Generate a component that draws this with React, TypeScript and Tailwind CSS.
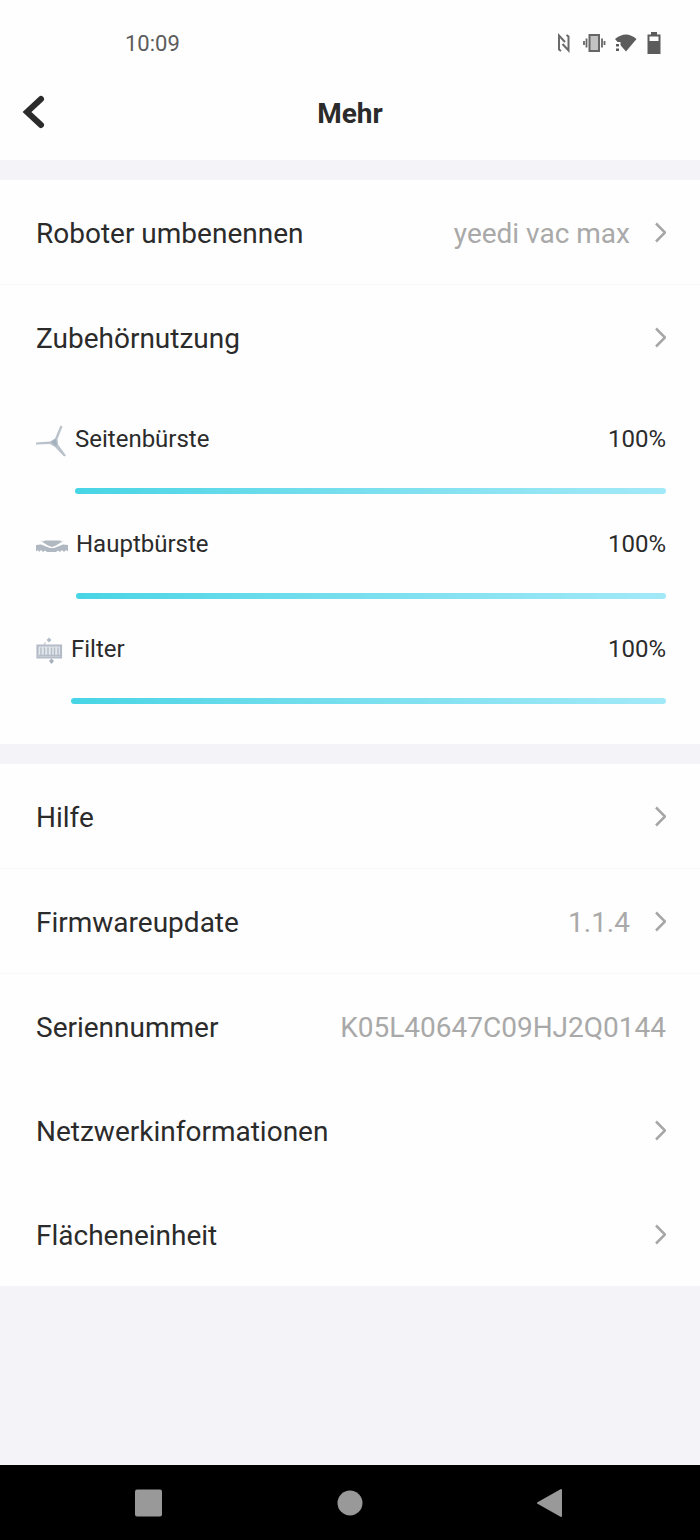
import type { ReactNode } from 'react';

const accessories = [
  { name: 'Seitenbürste', percent: 100, icon: <SideBrushIcon /> },
  { name: 'Hauptbürste', percent: 100, icon: <MainBrushIcon /> },
  { name: 'Filter', percent: 100, icon: <FilterIcon /> },
];

export default function App() {
  return (
    <div className="flex min-h-screen flex-col bg-[#f3f3f8] font-[Roboto,sans-serif] text-[#2b2b2b]">
      <header className="bg-[#fefefe]">
        <StatusBar />
        <div className="grid h-24 grid-cols-[1fr_auto_1fr] items-center px-5">
          <button type="button" aria-label="Zurück" className="justify-self-start">
            <svg className="h-10 w-7" viewBox="0 0 28 40" fill="none" stroke="#2b2b2b">
              <path d="M21 7 L7 20 L21 33" strokeWidth="6" strokeLinecap="round" strokeLinejoin="miter" />
            </svg>
          </button>
          <h1 className="pt-1 text-[28px] font-bold">Mehr</h1>
        </div>
      </header>

      <main className="mt-5 flex flex-col gap-5">
        <section className="bg-[#fefefe]">
          <Row label="Roboter umbenennen" value="yeedi vac max" divider />
          <Row label="Zubehörnutzung" />
          <ul className="flex flex-col gap-9 pt-9 pr-[34px] pb-10 pl-9">
            {accessories.map((item) => (
              <li key={item.name} className="flex gap-2">
                <span className="flex h-8 items-center">{item.icon}</span>
                <div className="flex-1">
                  <div className="flex h-7 items-center justify-between text-2xl">
                    <span>{item.name}</span>
                    <span>{item.percent}%</span>
                  </div>
                  <div
                    role="progressbar"
                    aria-label={item.name}
                    aria-valuenow={item.percent}
                    className="mt-[35px] h-1.5"
                  >
                    <div
                      className="h-full rounded-full bg-linear-to-r from-[#46d5e5] to-[#a2e9f8]"
                      style={{ width: `${item.percent}%` }}
                    />
                  </div>
                </div>
              </li>
            ))}
          </ul>
        </section>

        <section className="bg-[#fefefe]">
          <Row label="Hilfe" divider />
          <Row label="Firmwareupdate" value="1.1.4" divider />
          <Row label="Seriennummer" value="K05L40647C09HJ2Q0144" plain />
          <Row label="Netzwerkinformationen" />
          <Row label="Flächeneinheit" />
        </section>
      </main>

      <NavigationBar />
    </div>
  );
}

function Row({
  label,
  value,
  divider,
  plain,
}: {
  label: string;
  value?: string;
  divider?: boolean;
  plain?: boolean;
}) {
  const content: ReactNode = (
    <>
      <span>{label}</span>
      <span className="flex items-center gap-6 text-[#a9a9a9]">
        {value}
        {!plain && (
          <svg className="h-6 w-3" viewBox="0 0 12 24" fill="none" stroke="#a6a6a6" strokeWidth="2.5">
            <path d="M2 1.5 L11 10.5 L2 19.5" />
          </svg>
        )}
      </span>
    </>
  );
  const box = 'flex h-26 w-full items-center justify-between pt-[3px] pr-[34px] pl-9 text-[28px]';

  return (
    <div className={divider ? 'border-b border-[#f8f8f8]' : ''}>
      {plain ? (
        <div className={box}>{content}</div>
      ) : (
        <button type="button" className={box}>
          {content}
        </button>
      )}
    </div>
  );
}

function StatusBar() {
  return (
    <div className="flex h-16 items-center justify-between pt-[22px] pr-[38px] pl-[125px] text-[#5c5c5c]">
      <span className="text-[22px]">10:09</span>
      <div className="flex items-center gap-2">
        {/* NFC */}
        <svg className="h-6 w-5" viewBox="0 0 20 24" fill="none" stroke="#6a6a6a" strokeWidth="2">
          <path d="M7 20 L5 18.5 V4.5 L11 11 M12.5 4 L14.5 5.5 V19.5 L8.5 13" />
        </svg>
        {/* vibrate */}
        <svg className="h-6 w-6" viewBox="0 0 24 24" fill="none" stroke="#666" strokeWidth="2">
          <rect x="7.5" y="4" width="9.5" height="16" fill="#c2c2c2" />
          <path d="M4.5 7.5 V16.5 M20 7.5 V16.5 M2 10 V14 M22.5 10 V14" strokeWidth="1.8" />
        </svg>
        {/* wifi */}
        <svg className="h-6 w-6" viewBox="0 0 24 24" fill="#5c5c5c">
          <path d="M1 8 Q12 -1 22.5 8 L12 20.5 Z" />
          <path d="M0 11 H6.5 V20.5 H0 Z" fill="#fefefe" />
          <path d="M2 13 h3 v2.5 h-3 z M2 17.5 h3 v2.5 h-3 z" />
        </svg>
        {/* battery */}
        <svg className="h-6 w-4" viewBox="0 0 16 24" fill="none" stroke="#5c5c5c">
          <path d="M2.5 4.5 H13.5 V22 H2.5 Z" strokeWidth="2" />
          <path d="M5 2.5 H11" strokeWidth="3" />
          <path d="M2.5 10.5 H13.5 V22 H2.5 Z" fill="#5c5c5c" />
        </svg>
      </div>
    </div>
  );
}

function SideBrushIcon() {
  return (
    <svg className="h-8 w-[31px]" viewBox="0 0 31 32" fill="#b9c2cb">
      <path d="M0 17.5 L14 16.5 L19 13.5 L24.5 0.5 L26.5 1.5 L21.5 14 L22 19.5 L30 30.5 L28 31.5 L19 22 L14 19 L0 19.5 Z" />
      <path d="M15 17 L20 14 L21 20.5 L19.5 21 Z" fill="#a3b0bd" />
    </svg>
  );
}

function MainBrushIcon() {
  return (
    <svg className="h-8 w-8" viewBox="0 0 32 32" fill="#b0b8c1">
      <path d="M4 10.5 L7 11.5 L9 10.5 H24 L25.5 11.5 L28 10.5 L20 15.5 L16 17 L12 15.5 Z" />
      <path d="M0 15 L5 14.5 L14 18 H18 L27 14.5 L32 15 V21.5 L30 20 L28 22 L26 20 L24 22 L22 20.5 L20 22 H11 L9 20.5 L7 22 L5 20 L3 22 L2 20 L0 21.5 Z" />
    </svg>
  );
}

function FilterIcon() {
  return (
    <svg className="h-8 w-[27px]" viewBox="0 0 27 32" fill="none" stroke="#b3bcc7">
      <path d="M1.5 10.5 H25 V22.5 H1.5 Z" strokeWidth="2.2" fill="#e3e7ec" />
      <path
        d="M5 20.5 V12.5 M8.5 12.5 V20.5 M12 12.5 V20.5 M15.5 12.5 V20.5 M18.5 12.5 V20.5 M22 12.5 V20.5 M3 20.5 H24"
        strokeWidth="1.4"
      />
      <path d="M8 9.5 L9.5 7.5" strokeWidth="1.2" />
      <path d="M13 2.5 L15.5 5 L13 7.5 L10.5 5 Z" fill="#b3bcc7" stroke="none" />
      <path d="M15.5 23.5 L18 26 L15.5 29 L13 26 Z" fill="#a5afba" stroke="none" />
    </svg>
  );
}

function NavigationBar() {
  return (
    <nav className="mt-auto flex h-[75px] items-center justify-center gap-[168px] bg-black">
      <button type="button" aria-label="Letzte Apps">
        <svg className="h-8 w-8" viewBox="0 0 32 32" fill="#999">
          <rect x="1" y="2.5" width="27" height="27" rx="2" />
        </svg>
      </button>
      <button type="button" aria-label="Startbildschirm">
        <svg className="h-8 w-8" viewBox="0 0 32 32" fill="#999">
          <circle cx="16" cy="16" r="12.5" />
        </svg>
      </button>
      <button type="button" aria-label="Zurück">
        <svg className="h-8 w-8" viewBox="0 0 32 32" fill="#999" stroke="#999" strokeWidth="2" strokeLinejoin="round">
          <path d="M4 16 L27 3 V29 Z" />
        </svg>
      </button>
    </nav>
  );
}
